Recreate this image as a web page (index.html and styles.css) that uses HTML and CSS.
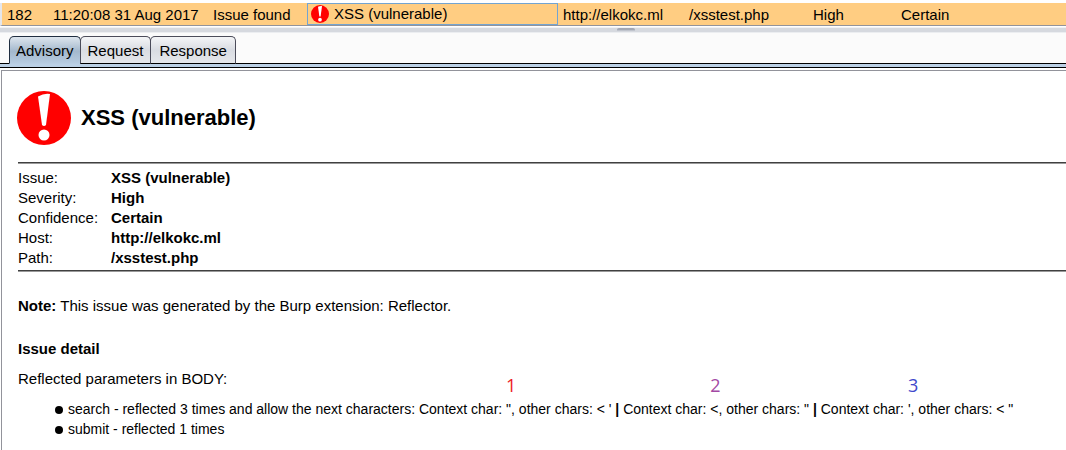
FILE: index.html
```html
<!DOCTYPE html>
<html lang="en">
<head>
<meta charset="utf-8">
<title>Advisory</title>
<link rel="stylesheet" href="styles.css">
</head>
<body>
<svg class="defs" aria-hidden="true">
  <symbol id="alert" viewBox="0 0 54 54">
    <circle cx="27" cy="27" r="27" fill="#f00"/>
    <path d="M21 5.500Q27 2 33 3L29 34Q27 36 25 34Z" fill="#fff"/>
    <circle cx="27" cy="44" r="5.500" fill="#fff"/>
  </symbol>
</svg>
<table class="issues">
  <colgroup>
    <col class="c-id"><col class="c-time"><col class="c-action"><col class="c-type">
    <col class="c-host"><col class="c-path"><col class="c-severity"><col class="c-confidence">
  </colgroup>
  <tbody>
    <tr>
      <td>182</td><td>11:20:08 31 Aug 2017</td><td>Issue found</td>
      <td class="focused"><svg class="icon-small"><use href="#alert"/></svg>XSS (vulnerable)</td>
      <td>http://elkokc.ml</td><td>/xsstest.php</td><td>High</td><td>Certain</td>
    </tr>
  </tbody>
</table>
<div class="splitter"><span class="grip"></span></div>
<nav class="tabs">
  <button class="tab selected" type="button">Advisory</button>
  <button class="tab" type="button">Request</button>
  <button class="tab" type="button">Response</button>
</nav>
<main class="advisory">
  <header class="title">
    <svg class="icon-large"><use href="#alert"/></svg>
    <h1>XSS (vulnerable)</h1>
  </header>
  <table class="facts">
    <tbody>
      <tr><th>Issue:</th><td>XSS (vulnerable)</td></tr>
      <tr><th>Severity:</th><td>High</td></tr>
      <tr><th>Confidence:</th><td>Certain</td></tr>
      <tr><th>Host:</th><td>http://elkokc.ml</td></tr>
      <tr><th>Path:</th><td>/xsstest.php</td></tr>
    </tbody>
  </table>
  <p class="note"><b>Note:</b> This issue was generated by the Burp extension: Reflector.</p>
  <h2>Issue detail</h2>
  <p>Reflected parameters in BODY:</p>
  <ul class="params">
    <li>search - reflected 3 times and allow the next characters: Context char: <span class="mark">"<i class="one">1</i></span>, other chars: &lt; ' <b>|</b> Context char: <span class="mark">&lt;<i class="two">2</i></span>, other chars: " <b>|</b> Context char: <span class="mark">'<i class="three">3</i></span>, other chars: &lt; "</li>
    <li>submit - reflected 1 times</li>
  </ul>
</main>
</body>
</html>
```
FILE: styles.css
```css
* { box-sizing: border-box; }
body {
  display: flex;
  flex-direction: column;
  min-height: 100vh;
  margin: 0;
  padding-top: 3px;
  background: #fff;
  color: #000;
  font: 15px/20px "Liberation Sans", Arial, sans-serif;
}
.defs { position: absolute; width: 0; height: 0; }
.issues {
  width: 100%;
  table-layout: fixed;
  border-collapse: separate;
  border-spacing: 0;
  border-left: 2px solid #e4e6ec;
  border-bottom: 1px solid #92939b;
}
.issues td {
  height: 22px;
  padding: 2px 5px 0;
  background: #ffcd82;
  white-space: nowrap;
}
.issues td.focused { padding: 0 3px; border: 1px solid #73a4d1; }
.c-id { width: 46px; }
.c-time { width: 160px; }
.c-action { width: 99px; }
.c-type { width: 251px; }
.c-host { width: 126px; }
.c-path { width: 124px; }
.c-severity { width: 88px; }
.icon-small { width: 18px; height: 18px; margin-right: 5px; vertical-align: -4px; }
.splitter {
  display: flex;
  justify-content: center;
  height: 6px;
  margin-top: 1px;
  padding-left: 186px;
  background: #d6d9df;
  border-top: 1px solid #f1f2f4;
  border-bottom: 1px solid #eceef1;
}
.grip { width: 18px; height: 3px; background: #c0c4cd; border-top: 2px solid #a4a8b4; border-radius: 2px 2px 0 0; }
.tabs {
  display: flex;
  align-items: flex-end;
  height: 35px;
  padding: 0 9px 3px;
  background: linear-gradient(#000, #000) 0 30px / 100% 1px no-repeat,
    linear-gradient(#bbd0e5, #bbd0e5) 0 31px / 100% 3px no-repeat,
    #fbfbfb;
  border-bottom: 1px solid #000;
}
.tab {
  height: 28px;
  margin: 0 0 0 -1px;
  padding: 2px 7px 0;
  font: inherit;
  color: #000;
  background: linear-gradient(#f4f5f7, #d9dce2 50%, #e5e7eb);
  border: 1px solid #4b4c5a;
  border-bottom-color: #000;
  border-radius: 5px 5px 0 0;
}
.tab:last-child { padding: 2px 8px 0; }
.tab.selected {
  margin-left: 0;
  padding: 2px 6px 0;
  background: linear-gradient(#dde5ed, #a3b8cd 55%, #b6cbe0);
  border-color: #202e40;
  border-bottom-color: #b8cde2;
}
.advisory {
  flex: 1;
  margin: 2px 0 0 1px;
  padding: 20px 0 8px 16px;
  border: solid #92939b;
  border-width: 1px 0 0 1px;
}
.title { display: flex; align-items: center; gap: 10px; height: 54px; margin-left: -1px; }
.icon-large { width: 54px; height: 54px; }
h1 { margin: 0; font-size: 22px; line-height: 26px; }
.facts {
  width: 100%;
  margin: 17px 0 25px;
  padding: 5px 0 2px;
  border: solid #404040;
  border-width: 1px 0;
  border-spacing: 0;
  box-shadow: inset 0 1px #999, 0 1px #999;
}
.facts th { width: 93px; padding: 0; font-weight: normal; text-align: left; }
.facts td { padding: 0; font-weight: bold; }
p, h2 { margin: 0; font-size: 15px; line-height: 20px; }
h2 { margin: 23px 0 10px; }
.params { margin: 10px 0 0; padding: 0; list-style: none; font-size: 14px; }
.params li { padding-left: 50px; white-space: nowrap; }
.params li::before {
  content: "";
  display: inline-block;
  width: 8px;
  height: 8px;
  margin: 0 5px 0 -13px;
  border-radius: 50%;
  background: #000;
}
.mark { position: relative; }
.mark i {
  position: absolute;
  bottom: 22px;
  left: 0;
  font: 18px/20px "Open Sans", sans-serif;
}
.one { color: #ed1c24; }
.two { color: #a349a4; }
.three { color: #3f48cc; }
```
